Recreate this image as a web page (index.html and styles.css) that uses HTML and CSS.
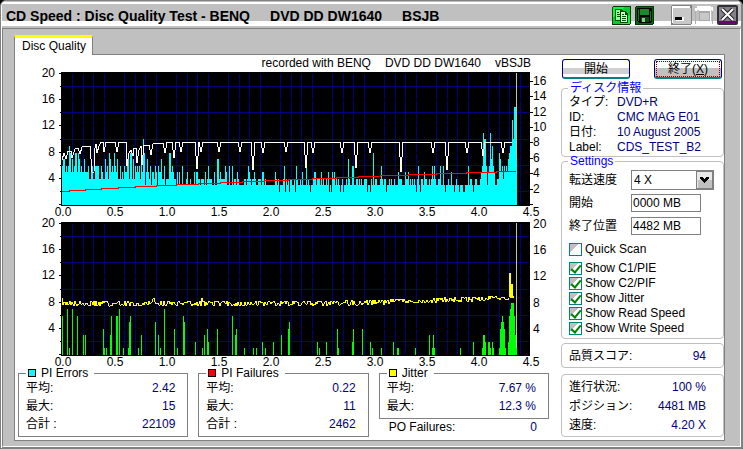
FILE: index.html
```html
<!DOCTYPE html>
<html lang="ja">
<head>
<meta charset="utf-8">
<title>CD Speed</title>
<link rel="stylesheet" href="styles.css">
</head>
<body>
<div class="window">
  <header class="titlebar">
    <h1 class="title"><span>CD Speed : Disc Quality Test - BENQ</span><span>DVD DD DW1640</span><span>BSJB</span></h1>
    <div class="tools">
      <button class="tool" aria-label="Copy">
        <svg viewBox="0 0 19 19" shape-rendering="crispEdges"><rect width="19" height="19" rx="2" fill="#003c00"/><path d="M1 1h17v17H1z" fill="#0c3"/><path d="M1 1h12L1 11zM18 8v10H8z" fill="#0f4"/><path d="M3 3h6l2 2v10H3z" fill="#050"/><path d="M4 4h4v2h2v8H4z" fill="#9f9"/><path d="M5 6h2v1H5zM5 8h4v1H5zM5 10h4v1H5z" fill="#050"/><path d="M8 5h5l3 3v9H8z" fill="#040"/><path d="M9 6h4v3h2v7H9z" fill="#cfc"/><path d="M10 8h2v1h-2zM10 10h4v1h-4zM10 12h4v1h-4zM10 14h4v1h-4z" fill="#050"/></svg>
      </button>
      <button class="tool" aria-label="Save">
        <svg viewBox="0 0 19 19" shape-rendering="crispEdges"><rect width="19" height="19" rx="2" fill="#003c00"/><path d="M1 1h17v17H1z" fill="#086018"/><path d="M2 2h15v14h-1v1H4l-2-2z" fill="#000"/><path d="M5 3h9v6H5z" fill="#1a8a2a"/><path d="M3 3h1v12H3zM15 5h1v10h-1z" fill="#0a7a1a"/><path d="M6 11h8v5H6z" fill="#064a10"/><path d="M7 12h3v4H7z" fill="#8c8"/></svg>
      </button>
    </div>
    <div class="controls">
      <button class="control" aria-label="Minimize">
        <svg viewBox="0 0 21 20" shape-rendering="crispEdges"><rect width="21" height="20" rx="2" fill="#808080"/><path d="M1 1h18v17H1z" fill="#fff"/><path d="M2 3h18v16H2z" fill="#c8c8c8"/><path d="M5 12h8v4H5z" fill="#fff"/><path d="M4 12h7v3H4z" fill="#000"/></svg>
      </button>
      <button class="control" aria-label="Maximize">
        <svg viewBox="0 0 21 20" shape-rendering="crispEdges"><path d="M3 1h14v1h2v4h-1V5H3v1H1V3h2z" fill="#fff"/><path d="M1 6h1v13H1zM18 6h1v13h-1z" fill="#b0b0b0"/><path d="M5 5h12v12H5z" fill="#fff"/><path d="M5 6h11v10H5z" fill="#a8a8a8"/><path d="M6 8h9v7H6z" fill="#c8c8c8"/></svg>
      </button>
      <button class="control" aria-label="Close">
        <svg viewBox="0 0 21 20"><rect width="21" height="20" rx="2" fill="#303038"/><path d="M2 2h17v16H2z" fill="#85818a"/><path d="M2 16h17v2H2z" fill="#700070"/><path d="M5 4l11 11M16 4L5 15" stroke="#222" stroke-width="4"/><path d="M5 4l11 11M16 4L5 15" stroke="#fff" stroke-width="2"/></svg>
      </button>
    </div>
  </header>

  <main class="body">
    <nav class="tabs"><a class="tab" href="#disc-quality">Disc Quality</a></nav>
    <section class="panel" id="disc-quality">
      <div class="results">
        <p class="recorder"><span>recorded with BENQ</span><span>DVD DD DW1640</span><span>vBSJB</span></p>
        <svg class="chart" id="errors" viewBox="15 70 541 148" role="img" aria-label="PI Errors"></svg>
        <svg class="chart" id="failures" viewBox="15 218 541 149" role="img" aria-label="PI Failures"></svg>
        <div class="stats">
          <fieldset class="stat">
            <legend><i class="swatch cyan"></i>PI Errors</legend>
            <dl><div><dt>平均:</dt><dd>2.42</dd></div><div><dt>最大:</dt><dd>15</dd></div><div><dt>合計 :</dt><dd>22109</dd></div></dl>
          </fieldset>
          <fieldset class="stat">
            <legend><i class="swatch red"></i>PI Failures</legend>
            <dl><div><dt>平均:</dt><dd>0.22</dd></div><div><dt>最大:</dt><dd>11</dd></div><div><dt>合計 :</dt><dd>2462</dd></div></dl>
          </fieldset>
          <div class="jitter">
            <fieldset class="stat">
              <legend><i class="swatch yellow"></i>Jitter</legend>
              <dl><div><dt>平均:</dt><dd>7.67 %</dd></div><div><dt>最大:</dt><dd>12.3 %</dd></div></dl>
            </fieldset>
            <dl class="po"><div><dt>PO Failures:</dt><dd>0</dd></div></dl>
          </div>
        </div>
      </div>

      <aside class="sidebar">
        <div class="actions">
          <button class="push">開始</button>
          <button class="push focused">終了(<u>X</u>)</button>
        </div>
        <fieldset class="group disc">
          <legend>ディスク情報</legend>
          <dl class="info">
            <dt>タイプ:</dt><dd>DVD+R</dd>
            <dt>ID:</dt><dd>CMC MAG E01</dd>
            <dt>日付:</dt><dd>10 August 2005</dd>
            <dt>Label:</dt><dd>CDS_TEST_B2</dd>
          </dl>
        </fieldset>
        <fieldset class="group settings">
          <legend>Settings</legend>
          <div class="field">
            <label for="speed">転送速度</label>
            <span class="combo"><select id="speed"><option>4 X</option></select><svg class="arrow" viewBox="0 0 17 18" shape-rendering="crispEdges"><path d="M0 0h17v18H0z" fill="#808080"/><path d="M1 1h15v16H1z" fill="#e8e8e8"/><path d="M2 9h14v8H2z" fill="#c0c0c0"/><path d="M4 6h3v1h1v1h1V7h1V6h3v2h-1v1h-1v1h-1v1H9v1H8v-1H7v-1H6V9H5V8H4z" fill="#000"/></svg></span>
          </div>
          <div class="field"><label for="start">開始</label><input class="text" id="start" value="0000 MB"></div>
          <div class="field"><label for="end">終了位置</label><input class="text" id="end" value="4482 MB"></div>
          <label class="check quick"><input type="checkbox">Quick Scan</label>
          <label class="check"><input type="checkbox" checked>Show C1/PIE</label>
          <label class="check"><input type="checkbox" checked>Show C2/PIF</label>
          <label class="check"><input type="checkbox" checked>Show Jitter</label>
          <label class="check"><input type="checkbox" checked>Show Read Speed</label>
          <label class="check"><input type="checkbox" checked>Show Write Speed</label>
        </fieldset>
        <dl class="box score"><div><dt>品質スコア:</dt><dd>94</dd></div></dl>
        <dl class="box progress"><div><dt>進行状況:</dt><dd>100 %</dd></div><div><dt>ポジション:</dt><dd>4481 MB</dd></div><div><dt>速度:</dt><dd>4.20 X</dd></div></dl>
      </aside>
    </section>
  </main>
</div>
<script src="charts.js"></script>
</body>
</html>
```
FILE: styles.css
```css
* { box-sizing: border-box; }

body {
  margin: 0;
  background: #000;
  color: #000;
  font: 12px/15px "Liberation Sans", "Noto Sans CJK JP", sans-serif;
}

button, input, select { font: inherit; color: inherit; }
dl, dd, p, h1 { margin: 0; }
fieldset { margin: 0; min-width: 0; }

.window {
  min-height: 100vh;
  display: flex;
  flex-direction: column;
  background: #c0c0c0;
  border: 1px solid #808080;
  border-radius: 6px 6px 0 0;
  box-shadow: inset 1px 1px #fff, inset -1px -1px #808080;
}

.titlebar {
  display: flex;
  align-items: flex-start;
  height: 27px;
  margin: 0 1px;
  padding: 4px 3px 0 4px;
  background: linear-gradient(#c0c0c0 1px, #fff 1px 3px, #c0c0c0 3px 20px, #fff 20px 25px, #c0c0c0 25px);
  border-radius: 5px 5px 0 0;
}

.title {
  flex: 1;
  display: flex;
  gap: 20px;
  padding-top: 3px;
  font-size: 14px;
  line-height: 16px;
  font-weight: bold;
  white-space: nowrap;
}

.tools, .controls { display: flex; }
.tools { gap: 4px; margin-right: 17px; padding-top: 1px; }
.controls { gap: 2px; }
.tool, .control { padding: 0; border: 0; background: none; }
.tool svg { display: block; width: 19px; height: 19px; }
.control svg { display: block; width: 21px; height: 20px; }

.body {
  flex: 1;
  display: flex;
  flex-direction: column;
  margin: 0 1px 1px;
  padding: 6px 15px 5px 11px;
  border: 1px solid #808080;
  border-right-color: #fff;
  border-bottom-color: #fff;
}

.tabs { display: flex; }

.tab {
  height: 20px;
  margin-bottom: -1px;
  padding: 0 6px 0 7px;
  background: #fff;
  border: 1px solid #808080;
  border-top: 3px solid #ff0;
  border-bottom: 0;
  border-radius: 2px 2px 0 0;
  color: #000;
  line-height: 16px;
  text-decoration: none;
  z-index: 1;
}

.panel {
  flex: 1;
  display: grid;
  grid-template-columns: 1fr 163px;
  gap: 5px;
  align-items: start;
  background: #fff;
  border: 1px solid #808080;
}

.results { min-width: 0; }

.recorder {
  display: flex;
  justify-content: flex-end;
  gap: 14px;
  height: 15px;
  padding: 1px 25px 0 0;
  white-space: nowrap;
}

.chart { display: block; width: 100%; overflow: visible; }
.chart text { font: 12px "Liberation Sans", sans-serif; }

.stats {
  display: grid;
  grid-template-columns: repeat(3, 1fr);
  gap: 10px;
  padding: 0 7px 3px 3px;
}

.stat {
  padding: 0 12px 2px 7px;
  border: 1px solid #808080;
}

.stat legend { padding: 0 6px 0 2px; line-height: 13px; }

.swatch {
  display: inline-block;
  width: 8px;
  height: 8px;
  margin-right: 5px;
  border: 1px solid #000;
}

.cyan { background: #0ff; }
.red { background: #f00; }
.yellow { background: #ff0; }

dl > div { display: flex; justify-content: space-between; }
dd { color: #000080; }
.stat dl { line-height: 17px; }
.stat dl > div { height: 18px; }
.po { padding: 0 12px 0 10px; line-height: 17px; }
.po > div { height: 17px; }

.sidebar { padding: 4px 0 3px; }
.actions { display: flex; justify-content: space-between; padding: 0 2px 4px 1px; }

.push {
  width: 68px;
  height: 20px;
  padding: 1px 0 0;
  background: linear-gradient(#fff 50%, #d0d0d0 50% 80%, #fff 80%);
  border: 1px solid #000080;
  border-bottom: 2px solid #008080;
  border-radius: 3px;
  line-height: 16px;
}

.focused {
  background: linear-gradient(#fff 50%, #c0c0c0 50%);
  outline: 1px dotted #800000;
  outline-offset: -3px;
}

.group {
  border: 1px solid #c0c0c0;
  border-radius: 4px;
}

.group legend {
  margin-left: -1px;
  padding: 0 2px;
  color: #00f;
  line-height: 10px;
}

.disc { margin-bottom: -1px; padding: 2px 7px 1px; }
.info { display: grid; grid-template-columns: 48px 1fr; white-space: nowrap; }
.info dt, .info dd { height: 15px; }

.settings { padding: 5px 7px 2px; }
.field { display: flex; align-items: center; height: 18px; margin-bottom: 5px; }
.field label { width: 62px; white-space: nowrap; }

.combo { display: flex; flex: 0 0 83px; height: 20px; border: 1px solid #808080; }
.combo select { flex: 1; min-width: 0; padding: 0 2px; border: 0; background: #fff; appearance: none; }
.arrow { width: 17px; height: 18px; }

.text {
  width: 70px;
  height: 18px;
  padding: 0 1px;
  border: 1px solid #808080;
  background: #fff;
}

.check { display: flex; align-items: center; gap: 3px; height: 15px; }
.quick { margin: 7px 0 4px; }

.check input {
  display: grid;
  place-items: center;
  width: 13px;
  height: 13px;
  margin: 0;
  appearance: none;
  border: 1px solid #008080;
  background: linear-gradient(135deg, #c0c0c0 40%, #fff 40%);
}

.check input:checked::after {
  content: "";
  width: 4px;
  height: 8px;
  margin-bottom: 3px;
  border: solid #008000;
  border-width: 0 2px 2px 0;
  transform: rotate(40deg);
}

.box {
  margin-top: 4px;
  padding: 4px 17px 2px 7px;
  border: 1px solid #c0c0c0;
  border-radius: 4px;
}

.score { line-height: 17px; }
.progress { margin-top: 6px; padding-top: 3px; padding-bottom: 1px; line-height: 19px; }
```
FILE: charts.js
```js
const LEFT = 62, RIGHT = 530, UNIT = 6.55;

// Repeatable noise so the traces look the same on every load.
let seed = 11;
function noise() {
  seed = (seed * 1103515245 + 12345) % 2147483648;
  return seed / 2147483648;
}

function path(d, fill, stroke) {
  return `<path d="${d}" fill="${fill}" stroke="${stroke || 'none'}" shape-rendering="crispEdges"/>`;
}

function label(x, y, text, anchor) {
  return `<text x="${x}" y="${y}" text-anchor="${anchor}">${text}</text>`;
}

function bar(x, value, base) {
  const h = Math.round(value * UNIT);
  return `M${x} ${base - h}h1v${h}h-1z`;
}

function frame(top) {
  let cols = '', rows = '', gaps = '', ticks = '', texts = '';
  for (let i = 1; i < 45; i++) {
    if (i % 5) cols += `M${LEFT + Math.round(i * 10.4)} ${top + 2}h1v131h-1z`;
  }
  for (let v = 0; v <= 10; v++) {
    const y = top + 1 + Math.round(v * 13.1);
    if (v % 2) {
      rows += `M${LEFT} ${y}h${RIGHT - LEFT - 1}v1H${LEFT}z`;
      ticks += `M60 ${y}h2v1h-2z`;
    } else {
      gaps += `M${LEFT} ${y}h${RIGHT - LEFT}v1H${LEFT}z`;
      ticks += `M59 ${y}h3v1h-3z`;
      if (v < 10) texts += label(55, y + 4, 20 - v * 2, 'end');
    }
  }
  for (let i = 0; i <= 9; i++) {
    texts += label(LEFT + 1 + i * 52, top + 144, (i / 2).toFixed(1), 'middle');
  }
  return path(`M${LEFT - 1} ${top}h${RIGHT - LEFT + 1}v134H${LEFT - 1}z`, '#000') +
    path(cols, '#000080') + path(gaps, '#000') + path(rows, '#000080') + path(ticks, '#000') + texts;
}

const peaks = {
  62: 6, 63: 7, 64: 7, 66: 6, 69: 9, 70: 8, 72: 7, 75: 8, 76: 8, 78: 8, 79: 7, 81: 6, 84: 7, 88: 6, 92: 6,
  95: 6, 98: 6, 101: 6, 105: 7, 107: 6, 109: 8, 110: 7, 114: 8, 117: 7, 120: 6, 124: 6, 127: 7, 128: 8, 130: 8,
  131: 8, 133: 7, 137: 6, 141: 8, 143: 10, 144: 8, 147: 7, 150: 6, 155: 6, 158: 6, 161: 7, 164: 6, 169: 8,
  170: 8, 172: 6, 182: 6, 187: 5, 197: 5, 205: 5, 208: 6, 217: 7, 218: 7, 225: 6, 229: 6, 232: 6, 237: 5, 248: 6,
  262: 5, 275: 5, 284: 6, 296: 6, 306: 6, 321: 5, 328: 5, 334: 5, 348: 7, 352: 6, 353: 6, 373: 8, 381: 6,
  398: 5, 418: 6, 424: 5, 432: 6, 434: 6, 440: 6, 443: 6, 451: 5, 468: 6, 475: 4, 482: 6, 483: 11, 484: 10, 485: 10,
  486: 6, 489: 6, 490: 11, 491: 7, 492: 9, 493: 6, 499: 8, 500: 7, 502: 6, 504: 6, 506: 6, 507: 5, 508: 7, 509: 8,
  510: 9, 511: 9, 512: 13, 513: 10, 514: 15, 515: 15, 516: 15
};

function errorBars() {
  let d = '';
  for (let x = LEFT; x < 517; x++) {
    const n = noise();
    let v;
    if (x < 140) v = n < 0.3 ? 4 : n < 0.8 ? 5 : 6;
    else if (x < 180) v = n < 0.3 ? 3 : n < 0.65 ? 4 : 5;
    else if (x < 265) v = n < 0.5 ? 3 : n < 0.88 ? 4 : 5;
    else if (x < 480) v = n < 0.12 ? 2 : n < 0.7 ? 3 : n < 0.96 ? 4 : 5;
    else v = n < 0.2 ? 3 : n < 0.6 ? 4 : 5;
    d += bar(x, peaks[x] || v, 205);
  }
  return path(d, '#0ff');
}

function writeSpeed() {
  const dips = [[117, 152], [151, 155], [165, 153], [174, 158], [181, 152], [197, 169], [201, 152], [219, 152],
    [240, 152], [253, 170], [263, 153], [286, 152], [306, 168], [313, 153], [342, 153], [356, 168], [370, 153],
    [401, 172], [433, 153], [447, 170], [467, 153], [483, 156], [503, 153]];
  let d = 'M62 160L64 153L66 159L68 151H71L72 158L75 149L78 148L80 154L82 147L85 146H90L92 172L94 172L95 148L96 144L97 153L99 146L101 142H103L104 152L106 142';
  for (const [x, y] of dips) {
    if (x === 151) d += 'H126L127 166L129 153L131 150L133 156L134 148H136L137 163L139 150L141 146L142 165L144 145H149L151 155L153 144L163 143';
    else d += `H${x - 2}L${x - 1} ${Math.round((y + 142) / 2)}L${x} ${y}L${x + 1} ${Math.round((y + 142) / 2)}L${x + 2} 142`;
  }
  return path(d + 'H512', 'none', '#fff');
}

const readSpeed = path('M62 192V191H69V190H85V189H101V188H118V187H135V186H156V185H176V184H198V183H220V182H242V181H264V180H288V179H312V178H336V177H358V176H380V175H408V174H436V173H466V172H496V171H516', 'none', '#f00');

const failures = [
  [62, 6], [67, 7], [69, 1], [72, 7], [77, 6], [83, 3], [85, 3], [103, 4], [104, 1], [106, 1], [110, 3], [111, 6],
  [116, 6], [117, 6], [119, 7], [123, 1], [128, 1], [129, 5], [130, 6], [138, 1], [141, 3], [155, 5], [158, 3],
  [160, 1], [164, 7], [174, 4], [177, 1], [183, 6], [184, 5], [195, 2], [202, 1], [204, 3], [207, 4], [208, 2],
  [217, 4], [232, 6], [235, 3], [236, 4], [244, 1], [253, 1], [256, 1], [262, 2], [265, 1], [273, 2], [281, 3],
  [288, 4], [289, 5], [317, 2], [319, 1], [326, 2], [337, 4], [338, 1], [352, 2], [353, 4], [362, 4], [370, 2],
  [372, 1], [381, 1], [393, 2], [397, 1], [398, 1], [415, 1], [429, 3], [432, 1], [433, 3], [434, 1], [460, 1],
  [473, 2], [482, 1], [483, 3], [484, 3], [485, 2], [488, 2], [489, 2], [490, 1], [492, 2], [493, 1], [499, 1],
  [500, 4], [501, 5], [502, 6], [503, 5], [504, 4], [505, 1], [508, 2], [509, 6], [510, 7], [511, 8], [512, 8],
  [513, 8], [514, 6], [515, 3], [516, 1]
];

function jitter() {
  let d = 'M62 298';
  for (let x = 63; x < 515; x++) {
    const base = x < 330 ? 303.5 : 303.5 - (x - 330) * 0.03;
    const spike = { 153: 299, 154: 298, 202: 298, 510: 273, 512: 284 }[x];
    d += `L${x} ${spike || Math.round(base + (noise() - 0.5) * 6)}`;
  }
  return path(d, 'none', '#ff0');
}

let rightAxis = '', rightTicks = '';
for (let v = 0; v <= 16; v += 2) {
  const y = 204 - Math.round(v * 7.7);
  rightTicks += `M530 ${y}h3v1h-3z`;
  if (v) rightAxis += label(533, y + 4, v, 'start');
}
document.getElementById('errors').innerHTML = frame(72) + errorBars() + readSpeed + writeSpeed() +
  path('M516 73h1v86h-1z', '#c0c0c0') + path(rightTicks, '#000') + rightAxis;

let rightLabels = '';
for (let v = 4; v <= 20; v += 4) rightLabels += label(533, 359 - Math.round(v * UNIT), v, 'start');
document.getElementById('failures').innerHTML = frame(222) +
  path(failures.map(([x, v]) => bar(x, v, 355)).join(''), '#0f0') + jitter() +
  path('M516 223h1v125h-1z', '#c0c0c0') + rightLabels;
```
